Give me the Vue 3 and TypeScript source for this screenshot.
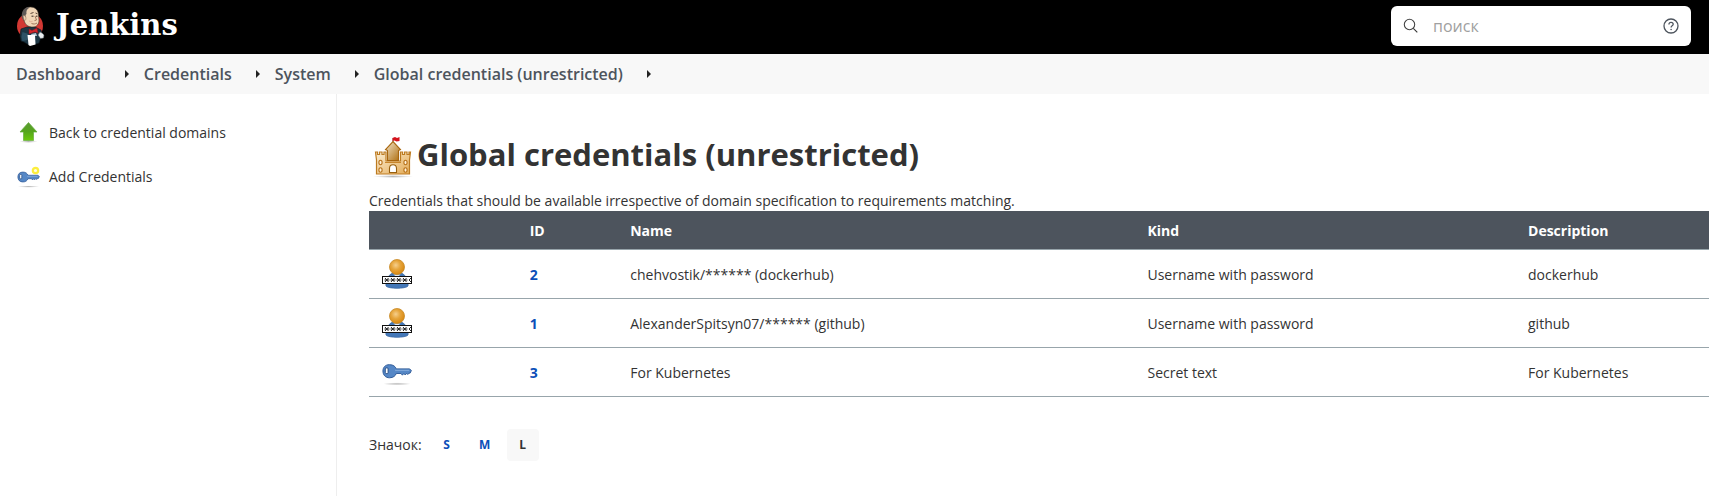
<script setup lang="ts">
import { ref } from 'vue'

interface Credential {
  id: number
  name: string
  kind: string
  description: string
  icon: 'user' | 'key'
}

const crumbs: string[] = ['Dashboard', 'Credentials', 'System', 'Global credentials (unrestricted)']

const credentials: Credential[] = [
  { id: 2, name: 'chehvostik/****** (dockerhub)', kind: 'Username with password', description: 'dockerhub', icon: 'user' },
  { id: 1, name: 'AlexanderSpitsyn07/****** (github)', kind: 'Username with password', description: 'github', icon: 'user' },
  { id: 3, name: 'For Kubernetes', kind: 'Secret text', description: 'For Kubernetes', icon: 'key' },
]

const sizes: string[] = ['S', 'M', 'L']
const iconSize = ref('L')
const query = ref('')
</script>

<template>
  <div class="page">
    <svg class="defs" aria-hidden="true">
      <defs>
        <radialGradient id="gHead" cx=".42" cy=".38" r=".6">
          <stop offset="0" stop-color="#f6cf8c" />
          <stop offset=".5" stop-color="#e6a53c" />
          <stop offset="1" stop-color="#d98a14" />
        </radialGradient>
        <linearGradient id="gArrow" x1="0" y1="0" x2="0" y2="1">
          <stop offset="0" stop-color="#5c9a35" />
          <stop offset=".5" stop-color="#55a51c" />
          <stop offset="1" stop-color="#6cc80c" />
        </linearGradient>
        <linearGradient id="gStone" x1="0" y1="0" x2="1" y2="1">
          <stop offset="0" stop-color="#fbeed4" />
          <stop offset="1" stop-color="#e3aa55" />
        </linearGradient>
        <linearGradient id="gTower" x1="0" y1="0" x2="1" y2="1">
          <stop offset="0" stop-color="#f3e6cd" />
          <stop offset="1" stop-color="#ad6c0c" />
        </linearGradient>
        <radialGradient id="gShadow">
          <stop offset="0" stop-color="#000" stop-opacity=".28" />
          <stop offset="1" stop-color="#000" stop-opacity="0" />
        </radialGradient>
        <symbol id="key" viewBox="0 0 32 24">
          <ellipse cx="16" cy="22" rx="15" ry="1.600" fill="url(#gShadow)" />
          <path
            d="M8 1.500c4 0 6.400 2 7.200 4.500h14.300l1.800 1.800-1.300 2.700-1.500.2-1 1.300-1.200-1.300-1.500 1.800-1.500-1.600-1.500 1.800-1.600-1.800h-5c-.8 2.600-3.200 4.600-7.200 4.600-4.300 0-7-3-7-7.200s2.700-6.800 7-6.800z"
            fill="#5587c6" stroke="#2c5795" stroke-width="1" />
          <path d="M14 7.500h15" stroke="#8db1df" stroke-width="1" />
          <rect x="3.500" y="5" width="3" height="6" rx="1" fill="#fff" stroke="#244a80" />
        </symbol>
      </defs>
    </svg>

    <header class="header">
      <a class="brand" href="#">
        <svg class="butler" viewBox="0 0 40 48" aria-hidden="true">
          <circle cx="18" cy="24" r="13" fill="#d33833" />
          <path d="M9 27l6-2h8l6 3 1 4-1 3-2 6-3 1-7 1-5-3-3-1-1-5z" fill="#1d3644" stroke="#0c1920" stroke-width=".6" />
          <path d="M9.500 35l1-5 6 2-1 6-5 1z" fill="#2e5266" />
          <path d="M11 13c0-5 3-8 7.500-8s8 3 8 8l.5 5c0 4-2 7-6 7-5 0-8-2-9-7z" fill="#f0d6b7" stroke="#3a3028" stroke-width=".6" />
          <path d="M10 16c-1-5 1-10 6-11l1 1c-2 1-3 3-2.500 6l-1 1 .5 3-2 3z" fill="#5f5a57" />
          <path d="M11 14c1-1 3 0 3 2s-1 3-2 2z" fill="#f0d6b7" stroke="#8b6a50" stroke-width=".5" />
          <path d="M18.500 11.500l3-1M23.500 11l2 .8" stroke="#5b4638" stroke-width="1" fill="none" />
          <path d="M19.500 14.200h2M24 14.200h1.500" stroke="#302820" stroke-width="1" />
          <path d="M23 14l1.500 4-2 .6M19.500 21.500c2 .8 4 .6 5.500-.5" stroke="#8b6045" stroke-width=".8" fill="none" />
          <path d="M17 18.800c1 1.200 2.500 1.200 3.500.5" stroke="#d9a58d" stroke-width=".8" fill="none" />
          <path d="M17 27l3 1.500 2-1 3-1.500 1 5-3-1-2 .5-4 1.500z" fill="#d5262b" stroke="#8d1218" stroke-width=".5" />
          <path d="M19 32l5-1 1 3h-5z" fill="#b9cbd8" />
          <path d="M15.500 33h7.500l.5 9.500-5.500 1.500-1.500-1z" fill="#fff" />
          <path d="M26 33l2-3 2 1 2 2-.5 3-3 .5z" fill="#e9edef" stroke="#59646b" stroke-width=".5" />
        </svg>
        <span class="brand-name">Jenkins</span>
      </a>
      <form class="search" role="search" @submit.prevent>
        <svg class="search-icon" viewBox="0 0 16 16" aria-hidden="true">
          <circle cx="6.500" cy="6.500" r="5.200" fill="none" stroke="#444" stroke-width="1.100" />
          <path d="M10.300 10.300l4 4" stroke="#333" stroke-width="1.100" />
        </svg>
        <input v-model="query" class="search-input" type="text" placeholder="поиск" aria-label="поиск" />
        <a class="help" href="#" aria-label="?">
          <svg viewBox="0 0 16 16" aria-hidden="true">
            <circle cx="8" cy="8" r="7" fill="none" stroke="#4d545d" stroke-width="1.300" />
            <path d="M5.900 6.400c0-1.300.9-2.100 2.100-2.100s2.200.8 2.200 1.900c0 1.600-2.100 1.600-2.100 3.200" fill="none" stroke="#4d545d" stroke-width="1.300" />
            <circle cx="8.100" cy="11.500" r=".8" fill="#4d545d" />
          </svg>
        </a>
      </form>
    </header>

    <nav class="crumbs">
      <template v-for="crumb in crumbs" :key="crumb">
        <a class="crumb" href="#">{{ crumb }}</a>
        <svg class="crumb-arrow" viewBox="0 0 4 8" aria-hidden="true"><path d="M0 0l4 4-4 4z" fill="#222" /></svg>
      </template>
    </nav>

    <div class="body">
      <aside class="side">
        <a class="task" href="#">
          <svg class="task-icon" viewBox="0 0 24 24" aria-hidden="true">
            <ellipse cx="12.500" cy="20.500" rx="9" ry="1.500" fill="url(#gShadow)" />
            <path d="M12.500 1.500l8.500 9.500h-3.500v8.500h-10V11H4z" fill="url(#gArrow)" stroke="#65ad3c" stroke-width=".7" />
          </svg>
          <span>Back to credential domains</span>
        </a>
        <a class="task" href="#">
          <svg class="task-icon" viewBox="0 0 24 24" aria-hidden="true">
            <circle cx="19.500" cy="5.500" r="2.700" fill="#fffde0" stroke="#fcee3c" stroke-width="2.200" />
            <use href="#key" x="1" y="6" width="23" height="17" />
          </svg>
          <span>Add Credentials</span>
        </a>
      </aside>

      <main class="main">
        <h1 class="title">
          <svg class="castle" viewBox="0 0 48 48" aria-hidden="true">
            <ellipse cx="24" cy="46.500" rx="20" ry="1.500" fill="url(#gShadow)" />
            <path d="M24 13V8" stroke="#777" />
            <path d="M23.500 8l2.500-1 2 1 2.500-1v4l-3 .5-2-1-2 .5z" fill="#d5121c" />
            <path
              d="M6.500 22h2v2.500h2v-2.500h2.500v2.500h2v-2.500h2v9H31.500v-9h2v2.500h2v-2.500h2.500v2.500h2v-2.500h1.500l-1 8V44H7.500V30z"
              fill="url(#gStone)" stroke="#bd7b20" stroke-width="1.200" />
            <path d="M18.500 30.500V20.500l-2-1L24 11.500l7.500 8-2 1v10z" fill="url(#gTower)" stroke="#a8660e" stroke-width="1.100" />
            <path d="M16 32.500h16" stroke="#c8862c" />
            <path d="M20.500 42.500v-4c0-5 7-5 7 0v4z" fill="#fff" stroke="#98600f" stroke-width="1.100" />
            <g fill="#fff2da" stroke="#b8721a" stroke-width="1.100">
              <ellipse cx="11.500" cy="32.500" rx="1.600" ry="2.200" />
              <ellipse cx="36.500" cy="32.500" rx="1.600" ry="2.200" />
              <ellipse cx="11.500" cy="40" rx="1.600" ry="2.200" />
              <ellipse cx="36.500" cy="40" rx="1.600" ry="2.200" />
            </g>
          </svg>
          <span>Global credentials (unrestricted)</span>
        </h1>
        <p class="lead">Credentials that should be available irrespective of domain specification to requirements matching.</p>

        <table class="table">
          <colgroup>
            <col class="c-icon" /><col class="c-id" /><col class="c-name" /><col class="c-kind" /><col />
          </colgroup>
          <thead>
            <tr>
              <th></th>
              <th scope="col">ID</th>
              <th scope="col">Name</th>
              <th scope="col">Kind</th>
              <th scope="col">Description</th>
            </tr>
          </thead>
          <tbody>
            <tr v-for="c in credentials" :key="c.id">
              <td>
                <svg v-if="c.icon === 'user'" class="row-icon" viewBox="0 0 32 32" aria-hidden="true">
                  <path d="M5 27C4 20 9 13 16 13s12 7 11 14c-2 3-20 3-22 0z" fill="#4478b8" stroke="#3a68a4" stroke-width=".8" />
                  <path d="M12.500 15.500l3.500 3 3.500-3z" fill="#dfe7f0" />
                  <circle cx="16" cy="8" r="7.500" fill="url(#gHead)" stroke="#c88925" stroke-width=".8" />
                  <rect x="1.500" y="17.500" width="29" height="7" fill="#fff" stroke="#111" />
                  <path
                    d="M4 19l3.500 4M7.500 19L4 23M3.500 21h5M10 19l3.500 4M13.500 19L10 23M9.500 21h5M16 19l3.500 4M19.500 19L16 23M15.500 21h5M22 19l3.500 4M25.500 19L22 23M21.500 21h5M30 19l-2 2 2 2"
                    fill="none" stroke="#111" stroke-width=".9" />
                </svg>
                <svg v-else class="row-icon" viewBox="0 0 32 32" aria-hidden="true">
                  <use href="#key" x="1" y="6" width="30" height="23" />
                </svg>
              </td>
              <td><a class="id" href="#">{{ c.id }}</a></td>
              <td>{{ c.name }}</td>
              <td>{{ c.kind }}</td>
              <td>{{ c.description }}</td>
            </tr>
          </tbody>
        </table>

        <div class="sizes">
          <span class="sizes-label">Значок:</span>
          <button
            v-for="s in sizes" :key="s" type="button" class="size"
            :class="{ active: s === iconSize }" :aria-pressed="s === iconSize" @click="iconSize = s"
          >{{ s }}</button>
        </div>
      </main>
    </div>
  </div>
</template>

<style>
body {
  margin: 0;
  background: #fff;
}
</style>

<style scoped>
.page {
  display: flex;
  flex-direction: column;
  min-height: 100vh;
  overflow-x: hidden;
  color: #333;
  font: 14px/20px "Open Sans", "Noto Sans", sans-serif;
}
a {
  color: inherit;
  text-decoration: none;
}
svg {
  display: block;
  flex: none;
}
.defs {
  position: absolute;
  width: 0;
  height: 0;
}
.header {
  display: flex;
  align-items: center;
  justify-content: space-between;
  box-sizing: border-box;
  height: 54px;
  padding: 0 18px 2px 12px;
  background: #000;
}
.brand {
  display: flex;
  align-items: center;
  gap: 4px;
  color: #fff;
}
.butler {
  width: 40px;
  height: 48px;
}
.brand-name {
  padding-bottom: 2px;
  font: bold 29px/36px "DejaVu Serif", serif;
}
.search {
  display: flex;
  align-items: center;
  box-sizing: border-box;
  width: 300px;
  height: 40px;
  padding: 0 12px;
  border-radius: 6px;
  background: #fff;
}
.search-icon {
  width: 16px;
  height: 16px;
}
.search-input {
  flex: 1;
  min-width: 0;
  margin: 0 12px 0 14px;
  padding: 0;
  border: 0;
  outline: 0;
  background: none;
  color: #333;
  font: 16px/24px "Open Sans", "Noto Sans", sans-serif;
}
.search-input::placeholder {
  color: #a0a0a0;
  opacity: 1;
}
.help svg {
  width: 16px;
  height: 16px;
}
.crumbs {
  display: flex;
  align-items: center;
  height: 40px;
  padding: 0 16px;
  background: #f8f8f8;
}
.crumb {
  color: #4d545d;
  font-size: 16px;
  font-weight: 600;
}
.crumb-arrow {
  width: 4px;
  height: 8px;
  margin: 0 15px 0 24px;
}
.body {
  display: flex;
  flex: 1;
}
.side {
  display: flex;
  flex: none;
  flex-direction: column;
  gap: 20px;
  box-sizing: border-box;
  width: 337px;
  padding: 27px 16px;
  border-right: 1px solid #eee;
}
.task {
  display: flex;
  align-items: center;
  gap: 9px;
  font-weight: 500;
}
.task-icon {
  width: 24px;
  height: 24px;
}
.main {
  flex: 1;
  min-width: 0;
  padding: 36px 0 32px 32px;
}
.title {
  display: flex;
  align-items: center;
  margin: 0 0 13px;
  font-size: 31px;
  font-weight: 700;
  line-height: 48px;
}
.castle {
  width: 48px;
  height: 48px;
}
.lead {
  margin: 0;
}
.table {
  width: 100%;
  border-collapse: separate;
  border-spacing: 0;
  table-layout: fixed;
}
.c-icon {
  width: 11.1%;
}
.c-id {
  width: 7.5%;
}
.c-name {
  width: 38.6%;
}
.c-kind {
  width: 28.4%;
}
.table th,
.table td {
  box-sizing: border-box;
  padding: 2px 12px 0;
  border-bottom: 1px solid #98a5ab;
  text-align: left;
}
.table th {
  height: 39px;
  background: #4d545d;
  color: #fff;
  font-weight: 700;
}
.table td {
  height: 49px;
}
.row-icon {
  width: 32px;
  height: 32px;
}
.id {
  color: #0b4fb8;
  font-weight: 700;
}
.sizes {
  display: flex;
  align-items: center;
  gap: 6px;
  margin-top: 32px;
}
.sizes-label {
  margin-right: 3px;
}
.size {
  width: 32px;
  height: 32px;
  padding: 0;
  border: 0;
  border-radius: 4px;
  background: none;
  color: #0b4fb8;
  font: 700 12px/16px "Open Sans", "Noto Sans", sans-serif;
}
.size.active {
  background: #f8f8f8;
  color: #333;
}
</style>
